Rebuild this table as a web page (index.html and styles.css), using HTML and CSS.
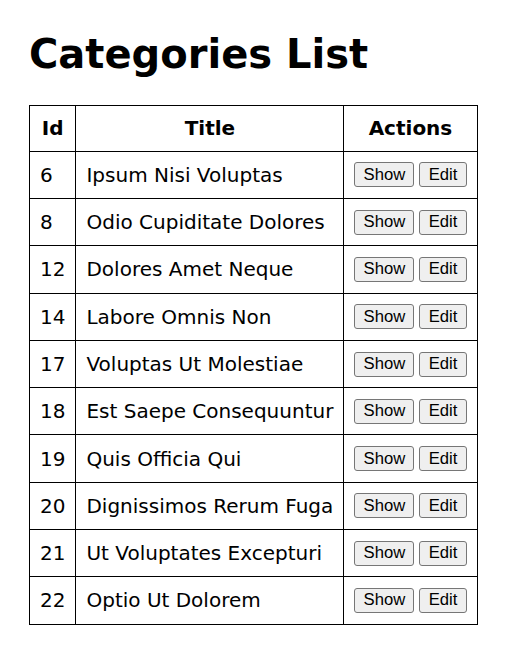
FILE: index.html
```html
<!DOCTYPE html>
<html>
<head>
<meta charset="utf-8">
<link rel="stylesheet" href="styles.css">
</head>
<body>
<h1 class="title">Categories List</h1>
<table class="list">
  <thead>
    <tr><th>Id</th><th>Title</th><th>Actions</th></tr>
  </thead>
  <tbody>
    <tr><td>6</td><td>Ipsum Nisi Voluptas</td><td><div class="acts"><button class="btn">Show</button><button class="btn">Edit</button></div></td></tr>
    <tr><td>8</td><td>Odio Cupiditate Dolores</td><td><div class="acts"><button class="btn">Show</button><button class="btn">Edit</button></div></td></tr>
    <tr><td>12</td><td>Dolores Amet Neque</td><td><div class="acts"><button class="btn">Show</button><button class="btn">Edit</button></div></td></tr>
    <tr><td>14</td><td>Labore Omnis Non</td><td><div class="acts"><button class="btn">Show</button><button class="btn">Edit</button></div></td></tr>
    <tr><td>17</td><td>Voluptas Ut Molestiae</td><td><div class="acts"><button class="btn">Show</button><button class="btn">Edit</button></div></td></tr>
    <tr><td>18</td><td>Est Saepe Consequuntur</td><td><div class="acts"><button class="btn">Show</button><button class="btn">Edit</button></div></td></tr>
    <tr><td>19</td><td>Quis Officia Qui</td><td><div class="acts"><button class="btn">Show</button><button class="btn">Edit</button></div></td></tr>
    <tr><td>20</td><td>Dignissimos Rerum Fuga</td><td><div class="acts"><button class="btn">Show</button><button class="btn">Edit</button></div></td></tr>
    <tr><td>21</td><td>Ut Voluptates Excepturi</td><td><div class="acts"><button class="btn">Show</button><button class="btn">Edit</button></div></td></tr>
    <tr><td>22</td><td>Optio Ut Dolorem</td><td><div class="acts"><button class="btn">Show</button><button class="btn">Edit</button></div></td></tr>
  </tbody>
</table>
</body>
</html>
```
FILE: styles.css
```css
html, body {
  margin: 0;
  padding: 0;
  background: #fff;
}
body {
  padding: 0 29px;
  font-family: "DejaVu Sans", sans-serif;
  color: #000;
}
.title {
  font-size: 40px;
  font-weight: bold;
  margin: 30px 0 27px;
  line-height: 48px;
  white-space: nowrap;
}
.list {
  border-collapse: collapse;
  font-size: 20px;
  white-space: nowrap;
}
.list th, .list td {
  border: 1px solid #000;
  padding: 10.65px 10px;
  text-align: left;
}
.list th {
  text-align: center;
  font-weight: bold;
  padding: 10.4px 10px;
}
.acts {
  display: flex;
  gap: 5px;
}
.btn {
  font-family: "Liberation Sans", Arial, sans-serif;
  font-size: 16.67px;
  height: 25px;
  padding: 0 8.2px;
  margin: 0;
  background: #efefef;
  border: 1px solid #767676;
  border-radius: 3px;
  color: #000;
}
```
